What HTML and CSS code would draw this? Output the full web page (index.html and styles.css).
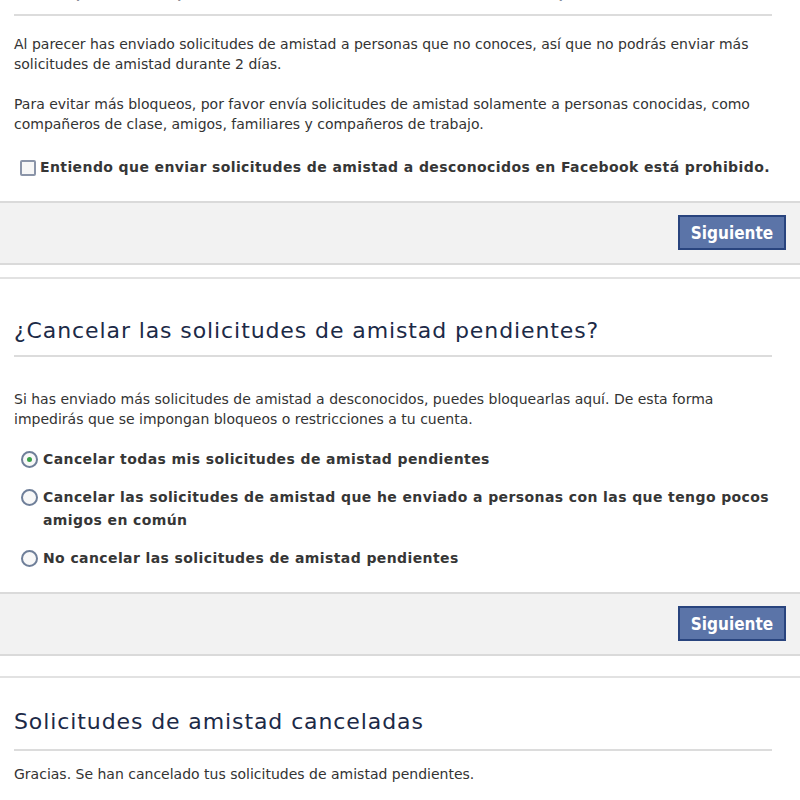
FILE: index.html
```html
<!DOCTYPE html>
<html lang="es">
<head>
    <meta charset="UTF-8">
    <meta name="viewport" content="width=device-width, initial-scale=1.0">
    <title>Solicitudes de amistad</title>
    <link rel="stylesheet" href="styles.css">
</head>
<body>
    <div class="card card-first">
        <div class="card-body">
            <h2 class="card-title">Tu capacidad para enviar solicitudes está bloqueada</h2>
            <p class="text first-text">Al parecer has enviado solicitudes de amistad a personas que no conoces, así que no podrás enviar más solicitudes de amistad durante 2 días.</p>
            <p class="text">Para evitar más bloqueos, por favor envía solicitudes de amistad solamente a personas conocidas, como compañeros de clase, amigos, familiares y compañeros de trabajo.</p>
            <label class="option check-option">
                <span class="checkbox"></span>
                <span>Entiendo que enviar solicitudes de amistad a desconocidos en Facebook está prohibido.</span>
            </label>
        </div>
        <div class="card-footer">
            <button class="btn">Siguiente</button>
        </div>
    </div>

    <div class="card card-second">
        <div class="card-body">
            <h2 class="card-title">¿Cancelar las solicitudes de amistad pendientes?</h2>
            <p class="text second-text">Si has enviado más solicitudes de amistad a desconocidos, puedes bloquearlas aquí. De esta forma impedirás que se impongan bloqueos o restricciones a tu cuenta.</p>
            <div class="options">
                <label class="option">
                    <span class="radio checked"></span>
                    <span>Cancelar todas mis solicitudes de amistad pendientes</span>
                </label>
                <label class="option">
                    <span class="radio"></span>
                    <span>Cancelar las solicitudes de amistad que he enviado a personas con las que tengo pocos amigos en común</span>
                </label>
                <label class="option">
                    <span class="radio"></span>
                    <span>No cancelar las solicitudes de amistad pendientes</span>
                </label>
            </div>
        </div>
        <div class="card-footer">
            <button class="btn">Siguiente</button>
        </div>
    </div>

    <div class="card card-third">
        <div class="card-body">
            <h2 class="card-title">Solicitudes de amistad canceladas</h2>
            <p class="text third-text">Gracias. Se han cancelado tus solicitudes de amistad pendientes.</p>
        </div>
    </div>
</body>
</html>
```

FILE: styles.css
```css
body {
    margin: 0;
    font-family: "DejaVu Sans", "Liberation Sans", sans-serif;
    font-size: 14px;
    color: #333;
    background-color: #fff;
}

.card {
    border-top: 2px solid #e2e2e2;
    margin-bottom: 12px;
    background-color: #fff;
}

.card-first {
    border-top: none;
}

.card-second {
    margin-bottom: 20px;
}

.card-body {
    padding: 0 28px 0 14px;
}

.card-title {
    margin: 0;
    padding: 39px 0 12px 0;
    font-size: 22px;
    font-weight: normal;
    letter-spacing: 0.9px;
    color: #1c2a47;
    border-bottom: 2px solid #dcdcdc;
    white-space: nowrap;
    overflow: hidden;
}

.card-first .card-title {
    padding-top: 0;
    margin-top: -23px;
    color: #8a8f99;
}

.card-third .card-title {
    padding-top: 31px;
    padding-bottom: 15px;
}

.text {
    margin: 0 0 20px 0;
    line-height: 20px;
}

.first-text {
    margin-top: 18px;
}

.second-text {
    margin-top: 32px;
    margin-bottom: 19px;
}

.third-text {
    margin-top: 13px;
}

.option {
    display: flex;
    align-items: flex-start;
    gap: 5px;
    font-weight: bold;
    font-size: 14px;
    letter-spacing: 0.4px;
    line-height: 23px;
    color: #363636;
    padding-left: 7px;
}

.check-option {
    padding-left: 6px;
    margin-top: 22px;
    padding-bottom: 22px;
    gap: 4px;
}

.options {
    display: flex;
    flex-direction: column;
    gap: 15px;
    padding-bottom: 22px;
}

.checkbox {
    flex: none;
    width: 12px;
    height: 12px;
    margin-top: 4px;
    border: 2px solid #8a94a8;
    border-radius: 2px;
    background-color: #f6f6f6;
}

.radio {
    flex: none;
    width: 13px;
    height: 13px;
    margin-top: 3px;
    border: 2px solid #6f7f99;
    border-radius: 50%;
    background-color: #f8f8f8;
    position: relative;
}

.radio.checked::after {
    content: "";
    position: absolute;
    left: 4px;
    top: 4px;
    width: 5px;
    height: 5px;
    border-radius: 50%;
    background-color: #3aa04a;
}

.card-footer {
    display: flex;
    justify-content: flex-end;
    padding: 12px 14px 13px 14px;
    background-color: #f2f2f2;
    border-top: 2px solid #dadada;
    border-bottom: 2px solid #dadada;
}

.btn {
    font-family: "DejaVu Sans Condensed", "Liberation Sans", sans-serif;
    font-size: 17px;
    font-weight: bold;
    color: #fff;
    background-color: #5b74a8;
    border: 2px solid #29447e;
    padding: 0 10px;
    height: 35px;
    width: 108px;
}
```
